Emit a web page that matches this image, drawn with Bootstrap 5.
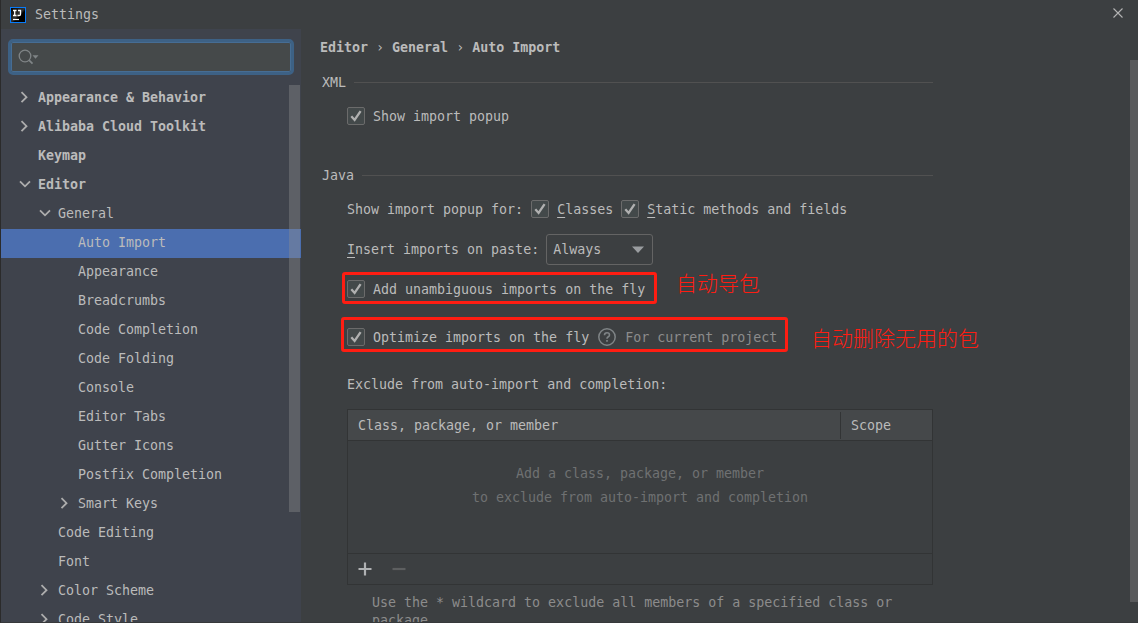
<!DOCTYPE html>
<html lang="en" data-bs-theme="dark">
<head>
<meta charset="utf-8">
<title>Settings</title>
<meta name="viewport" content="width=device-width, initial-scale=1">
<link href="https://cdn.jsdelivr.net/npm/bootstrap@5.3.0/dist/css/bootstrap.min.css" rel="stylesheet">
<style>
body{background:#3c3f41;color:#bbb;font:13.3px/18px "DejaVu Sans Mono",monospace;overflow:hidden}
.window{height:623px;border-left:1px solid #2b2b2b;border-bottom:1px solid #37393b}
.titlebar{height:29px;padding:0 14px 0 9px;flex:none}
.titlebar .caption{margin-left:9px}
.close-icon{margin-top:-3px}
.sidebar{width:300px;background:#3f434c;flex:none}
.search{margin:10px 7px 0 7px;height:36px;border:3px solid #3d6185;border-radius:5px;background:#45494a;box-shadow:inset 0 0 0 1px #466d94;padding-left:7px;flex:none}
.tree{margin-top:9px}
.tree a{height:29px;color:#bbb;padding-bottom:3px;text-decoration:none;white-space:pre}
.tree a.active{background:#4b6eaf}
.tree a svg{width:20px;height:14px;flex:none}
.lv0{padding-left:13px}.lv1{padding-left:33px}.lv2{padding-left:53px}
.lv0 span,.lv1 span,.lv2 span{margin-left:4px}
.tree a span,.txt{padding-top:2px}
.side-thumb{right:1px;top:56px;width:11px;height:427px;background:rgba(140,140,143,.4)}
.main-thumb{right:0;top:31px;width:8px;height:542px;background:#595a5c}
.main{padding-left:19px;min-width:0}
.crumbs{height:36px;white-space:pre}
.line{height:34px;white-space:pre}
.java{margin-top:25px}
.section-title{padding-left:2px;width:613px}
.section-title i{height:1px;background:#515151;flex:1;margin-left:8px}
.indent{margin-left:27px}
.paste-row{height:46px}
.check{width:18px;height:18px;border:1px solid #6b6b6b;border-radius:2px;background:#43494a;flex:none}
.check svg{display:block}
.lbl{margin-left:8px}
u{text-underline-offset:3px;text-decoration-thickness:1px}
.combo{width:107px;height:31px;border:1px solid #646464;border-radius:3px;padding:0 8px 0 6px;margin-left:7px}
.marked{border:3px solid #ff1d12;border-radius:3px;white-space:pre}
.one{width:315px;height:32px;margin-left:22px;padding:2px 0 0 2px}
.two{width:447px;height:35px;margin-left:21px;padding:5px 0 0 3px}
.second{margin-top:13px}
.exclude{margin-top:15px}
.note{color:#ff1d12;font:300 21px/24px "Noto Sans CJK SC",sans-serif}
.note-one{margin:-2px 0 0 19px}
.note-two{margin:8px 0 0 23px}
.muted{color:#8c8c8c}
.grid-box{width:586px;height:176px;border:1px solid #323435;margin:8px 0 0 27px}
.grid-head{height:31px;background:#45484a;border-bottom:1px solid #323435}
.grid-head .c1{width:493px;padding-left:10px;border-right:1px solid #323435;line-height:27px}
.grid-head .c2{padding-left:10px}
.hint{height:113px;color:#6f7172;line-height:24px;padding-top:21px;border-bottom:1px solid #323435;white-space:pre}
.tools{height:30px;padding-left:10px;gap:20px}
.help{margin:9px 0 0 52px;color:#8c8c8c;line-height:18px;white-space:pre}
</style>
</head>
<body>
<svg class="d-none">
  <symbol id="right" viewBox="0 0 20 14"><path d="M7.500 2.200l5 5-5 5" fill="none" stroke="#adadad" stroke-width="1.800"/></symbol>
  <symbol id="down" viewBox="0 0 20 14"><path d="M6 4.400l5 4.900 5-4.900" fill="none" stroke="#adadad" stroke-width="1.800"/></symbol>
  <symbol id="tick" viewBox="0 0 16 16"><path d="M3.300 8.300l3.300 3.700 6-8.800" fill="none" stroke="#b0b0b0" stroke-width="2.300"/></symbol>
</svg>
<div class="window d-flex flex-column overflow-hidden">
  <header class="titlebar d-flex align-items-center">
    <svg width="16" height="16"><defs><linearGradient id="g" x2="1" y2="1"><stop stop-color="#000"/><stop offset=".5" stop-color="#333"/><stop offset=".6" stop-color="#000"/></linearGradient></defs><rect x=".5" y=".5" width="15" height="15" fill="url(#g)" stroke="#087cfa"/><path d="M3 3.500h3.500M4.700 3.500v5M3 8.500h3.500M8 3.500h2.500v3.700q0 1.300-1.300 1.300H7.500" fill="none" stroke="#fff" stroke-width="1.300"/><path d="M3 12.500h6" stroke="#fff" stroke-width="1.200"/></svg>
    <span class="caption">Settings</span>
    <svg class="close-icon ms-auto" width="12" height="12"><path d="M1.500 1.500l9 9M10.500 1.500l-9 9" stroke="#b4b4b4" stroke-width="1.100"/></svg>
  </header>
  <div class="d-flex flex-grow-1 overflow-hidden position-relative">
    <aside class="sidebar d-flex flex-column overflow-hidden position-relative">
      <div class="search d-flex align-items-center">
        <svg width="22" height="18"><circle cx="7" cy="8" r="5.800" fill="none" stroke="#7f8486" stroke-width="1.300"/><path d="M11 12.200l3.500 3.500" stroke="#7f8486" stroke-width="1.800"/><path d="M14.500 7.300h6l-3 3.400z" fill="#7f8486"/></svg>
      </div>
      <nav class="tree d-flex flex-column">
        <a class="d-flex align-items-center flex-shrink-0 lv0 fw-bold"><svg><use href="#right"/></svg><span>Appearance &amp; Behavior</span></a>
        <a class="d-flex align-items-center flex-shrink-0 lv0 fw-bold"><svg><use href="#right"/></svg><span>Alibaba Cloud Toolkit</span></a>
        <a class="d-flex align-items-center flex-shrink-0 lv0 fw-bold"><svg></svg><span>Keymap</span></a>
        <a class="d-flex align-items-center flex-shrink-0 lv0 fw-bold"><svg><use href="#down"/></svg><span>Editor</span></a>
        <a class="d-flex align-items-center flex-shrink-0 lv1"><svg><use href="#down"/></svg><span>General</span></a>
        <a class="d-flex align-items-center flex-shrink-0 lv2 active"><svg></svg><span>Auto Import</span></a>
        <a class="d-flex align-items-center flex-shrink-0 lv2"><svg></svg><span>Appearance</span></a>
        <a class="d-flex align-items-center flex-shrink-0 lv2"><svg></svg><span>Breadcrumbs</span></a>
        <a class="d-flex align-items-center flex-shrink-0 lv2"><svg></svg><span>Code Completion</span></a>
        <a class="d-flex align-items-center flex-shrink-0 lv2"><svg></svg><span>Code Folding</span></a>
        <a class="d-flex align-items-center flex-shrink-0 lv2"><svg></svg><span>Console</span></a>
        <a class="d-flex align-items-center flex-shrink-0 lv2"><svg></svg><span>Editor Tabs</span></a>
        <a class="d-flex align-items-center flex-shrink-0 lv2"><svg></svg><span>Gutter Icons</span></a>
        <a class="d-flex align-items-center flex-shrink-0 lv2"><svg></svg><span>Postfix Completion</span></a>
        <a class="d-flex align-items-center flex-shrink-0 lv2"><svg><use href="#right"/></svg><span>Smart Keys</span></a>
        <a class="d-flex align-items-center flex-shrink-0 lv1"><svg></svg><span>Code Editing</span></a>
        <a class="d-flex align-items-center flex-shrink-0 lv1"><svg></svg><span>Font</span></a>
        <a class="d-flex align-items-center flex-shrink-0 lv1"><svg><use href="#right"/></svg><span>Color Scheme</span></a>
        <a class="d-flex align-items-center flex-shrink-0 lv1"><svg><use href="#right"/></svg><span>Code Style</span></a>
      </nav>
      <div class="side-thumb position-absolute"></div>
    </aside>
    <main class="main flex-grow-1">
      <div class="crumbs d-flex align-items-center fw-bold"><span class="txt">Editor <span class="fw-normal">›</span> General <span class="fw-normal">›</span> Auto Import</span></div>
      <div class="line section-title d-flex align-items-center"><span class="txt">XML</span><i></i></div>
      <div class="line indent d-flex align-items-center"><span class="check"><svg width="16" height="16"><use href="#tick"/></svg></span><span class="lbl txt">Show import popup</span></div>
      <div class="line java section-title d-flex align-items-center"><span class="txt">Java</span><i></i></div>
      <div class="line indent d-flex align-items-center"><span class="txt">Show import popup for:</span>
        <span class="check lbl"><svg width="16" height="16"><use href="#tick"/></svg></span><span class="lbl txt"><u>C</u>lasses</span>
        <span class="check lbl"><svg width="16" height="16"><use href="#tick"/></svg></span><span class="lbl txt"><u>S</u>tatic methods and fields</span></div>
      <div class="indent paste-row d-flex align-items-center"><span class="txt"><u>I</u>nsert imports on paste:</span>
        <span class="combo d-flex align-items-center justify-content-between"><span class="txt">Always</span><svg width="12" height="7"><path d="M0 .5h12L6 7z" fill="#9a9da0"/></svg></span></div>
      <div class="d-flex">
        <div class="marked one d-flex align-items-center"><span class="check"><svg width="16" height="16"><use href="#tick"/></svg></span><span class="lbl txt">Add unambiguous imports on the fly</span></div>
        <span class="note note-one">自动导包</span>
      </div>
      <div class="second d-flex">
        <div class="marked two d-flex align-items-center"><span class="check"><svg width="16" height="16"><use href="#tick"/></svg></span><span class="lbl txt">Optimize imports on the fly</span>
          <svg class="lbl" width="20" height="20"><circle cx="10" cy="10" r="8.200" fill="none" stroke="#7f8486" stroke-width="1.500"/><path d="M7.500 8.200q0-2.500 2.500-2.500t2.500 2.200q0 1.200-1.500 2.100-1 .600-1 1.700" fill="none" stroke="#7f8486" stroke-width="1.600"/><path d="M10 13v1.700" stroke="#7f8486" stroke-width="1.700"/></svg><span class="lbl txt muted">For current project</span></div>
        <span class="note note-two">自动删除无用的包</span>
      </div>
      <div class="line exclude indent d-flex align-items-center"><span class="txt">Exclude from auto-import and completion:</span></div>
      <div class="grid-box">
        <div class="grid-head d-flex align-items-center"><span class="c1">Class, package, or member</span><span class="c2 txt">Scope</span></div>
        <div class="hint text-center">Add a class, package, or member
to exclude from auto-import and completion</div>
        <div class="tools d-flex align-items-center">
          <svg width="14" height="14"><path d="M7 .5v13M.5 7h13" stroke="#afb1b3" stroke-width="2.200"/></svg>
          <svg width="14" height="14"><path d="M.5 7h13" stroke="#5d5f60" stroke-width="2.200"/></svg>
        </div>
      </div>
      <div class="help">Use the * wildcard to exclude all members of a specified class or
package</div>
    </main>
    <div class="main-thumb position-absolute"></div>
  </div>
</div>
<script src="https://cdn.jsdelivr.net/npm/bootstrap@5.3.0/dist/js/bootstrap.bundle.min.js"></script>
</body>
</html>
